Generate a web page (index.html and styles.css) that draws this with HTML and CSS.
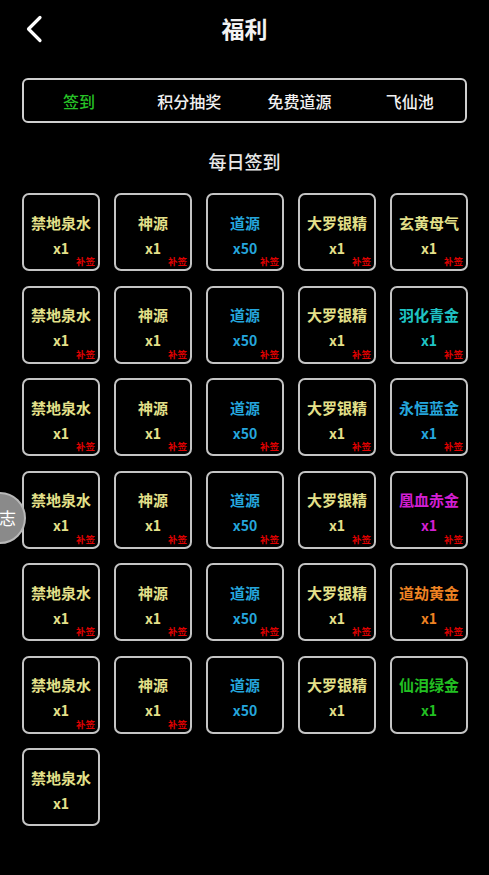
FILE: index.html
```html
<!DOCTYPE html>
<html lang="zh">
<head>
<meta charset="utf-8">
<link rel="stylesheet" href="styles.css">
</head>
<body>
<div class="page">
  <header class="header">
    <div class="back">
      <svg width="18" height="28" viewBox="0 0 18 28"><path d="M15 2.5 L3.5 14 L15 25.5" fill="none" stroke="#fff" stroke-width="3.2" stroke-linecap="round" stroke-linejoin="round"/></svg>
    </div>
    <h1 class="title">福利</h1>
    <div></div>
  </header>

  <nav class="tabs">
    <div class="tab active">签到</div>
    <div class="tab">积分抽奖</div>
    <div class="tab">免费道源</div>
    <div class="tab">飞仙池</div>
  </nav>

  <h2 class="section">每日签到</h2>

  <div class="grid">
    <div class="card yellow"><div class="name">禁地泉水</div><div class="qty">x1</div><span class="tag">补签</span></div>
    <div class="card yellow"><div class="name">神源</div><div class="qty">x1</div><span class="tag">补签</span></div>
    <div class="card blue"><div class="name">道源</div><div class="qty">x50</div><span class="tag">补签</span></div>
    <div class="card yellow"><div class="name">大罗银精</div><div class="qty">x1</div><span class="tag">补签</span></div>
    <div class="card yellow"><div class="name">玄黄母气</div><div class="qty">x1</div><span class="tag">补签</span></div>

    <div class="card yellow"><div class="name">禁地泉水</div><div class="qty">x1</div><span class="tag">补签</span></div>
    <div class="card yellow"><div class="name">神源</div><div class="qty">x1</div><span class="tag">补签</span></div>
    <div class="card blue"><div class="name">道源</div><div class="qty">x50</div><span class="tag">补签</span></div>
    <div class="card yellow"><div class="name">大罗银精</div><div class="qty">x1</div><span class="tag">补签</span></div>
    <div class="card cyan"><div class="name">羽化青金</div><div class="qty">x1</div><span class="tag">补签</span></div>

    <div class="card yellow"><div class="name">禁地泉水</div><div class="qty">x1</div><span class="tag">补签</span></div>
    <div class="card yellow"><div class="name">神源</div><div class="qty">x1</div><span class="tag">补签</span></div>
    <div class="card blue"><div class="name">道源</div><div class="qty">x50</div><span class="tag">补签</span></div>
    <div class="card yellow"><div class="name">大罗银精</div><div class="qty">x1</div><span class="tag">补签</span></div>
    <div class="card blue"><div class="name">永恒蓝金</div><div class="qty">x1</div><span class="tag">补签</span></div>

    <div class="card yellow"><div class="name">禁地泉水</div><div class="qty">x1</div><span class="tag">补签</span></div>
    <div class="card yellow"><div class="name">神源</div><div class="qty">x1</div><span class="tag">补签</span></div>
    <div class="card blue"><div class="name">道源</div><div class="qty">x50</div><span class="tag">补签</span></div>
    <div class="card yellow"><div class="name">大罗银精</div><div class="qty">x1</div><span class="tag">补签</span></div>
    <div class="card magenta"><div class="name">凰血赤金</div><div class="qty">x1</div><span class="tag">补签</span></div>

    <div class="card yellow"><div class="name">禁地泉水</div><div class="qty">x1</div><span class="tag">补签</span></div>
    <div class="card yellow"><div class="name">神源</div><div class="qty">x1</div><span class="tag">补签</span></div>
    <div class="card blue"><div class="name">道源</div><div class="qty">x50</div><span class="tag">补签</span></div>
    <div class="card yellow"><div class="name">大罗银精</div><div class="qty">x1</div><span class="tag">补签</span></div>
    <div class="card orange"><div class="name">道劫黄金</div><div class="qty">x1</div><span class="tag">补签</span></div>

    <div class="card yellow"><div class="name">禁地泉水</div><div class="qty">x1</div><span class="tag">补签</span></div>
    <div class="card yellow"><div class="name">神源</div><div class="qty">x1</div><span class="tag">补签</span></div>
    <div class="card blue"><div class="name">道源</div><div class="qty">x50</div></div>
    <div class="card yellow"><div class="name">大罗银精</div><div class="qty">x1</div></div>
    <div class="card green"><div class="name">仙泪绿金</div><div class="qty">x1</div></div>

    <div class="card yellow"><div class="name">禁地泉水</div><div class="qty">x1</div></div>
  </div>
</div>
<div class="float-btn">志</div>
</body>
</html>
```

FILE: styles.css
```css
* { box-sizing: border-box; }
html, body {
  margin: 0;
  padding: 0;
  background: #000;
}
body {
  font-family: "Noto Sans CJK SC", "Noto Sans", sans-serif;
  color: #fff;
  width: 489px;
  min-height: 875px;
  overflow: hidden;
  position: relative;
}
.page {
  padding: 0 22px;
}
.header {
  height: 56px;
  display: grid;
  grid-template-columns: 1fr auto 1fr;
  align-items: center;
}
.back {
  display: flex;
  align-items: center;
  padding-left: 3px;
  padding-top: 1px;
}
.back svg { display: block; }
.title {
  margin: 0;
  font-size: 23px;
  font-weight: 700;
  line-height: 30px;
  color: #f2f2f2;
}
.tabs {
  margin-top: 22px;
  height: 45px;
  border: 2px solid #cfcfcf;
  border-radius: 6px;
  display: grid;
  grid-template-columns: repeat(4, 1fr);
  align-items: center;
}
.tab {
  text-align: center;
  font-size: 16px;
  font-weight: 500;
  color: #f0f0f0;
  line-height: 22px;
}
.tab.active {
  color: #27c227;
}
.section {
  margin: 26px 0 0;
  text-align: center;
  font-size: 18px;
  font-weight: 500;
  line-height: 24px;
  color: #e8e8e8;
}
.grid {
  margin-top: 20px;
  display: grid;
  grid-template-columns: repeat(5, 78px);
  column-gap: 14px;
  row-gap: 14.5px;
}
.card {
  position: relative;
  height: 78px;
  border: 2px solid #c4c4c4;
  border-radius: 7px;
  display: flex;
  flex-direction: column;
  align-items: center;
  padding-top: 18.5px;
}
.name {
  font-size: 15px;
  font-weight: 700;
  line-height: 18px;
  white-space: nowrap;
}
.qty {
  margin-top: 7px;
  font-size: 14px;
  font-weight: 700;
  line-height: 18px;
}
.tag {
  position: absolute;
  right: 3px;
  bottom: 2px;
  font-size: 9.5px;
  line-height: 11px;
  font-weight: 700;
  color: #e00000;
}
.yellow { color: #e4e08a; }
.blue { color: #25a6dc; }
.cyan { color: #1fc4c4; }
.magenta { color: #d21fd2; }
.orange { color: #ee8222; }
.green { color: #22c022; }
.float-btn {
  position: absolute;
  left: -26px;
  top: 492px;
  width: 52px;
  height: 52px;
  border-radius: 50%;
  background: #8a8a8a;
  border: 2px solid #b8b8b8;
  color: #fff;
  font-size: 17px;
  line-height: 48px;
  text-align: right;
  padding-right: 8px;
}
```
